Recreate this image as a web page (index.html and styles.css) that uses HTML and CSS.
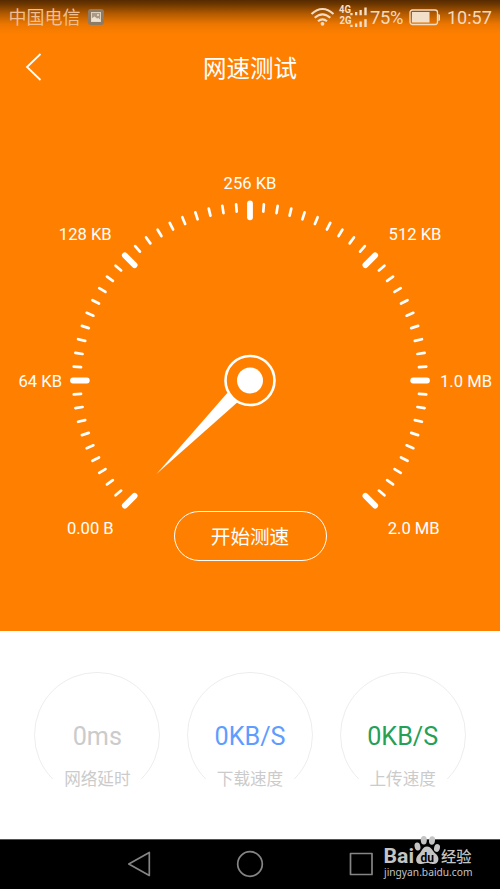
FILE: index.html
```html
<!DOCTYPE html>
<html lang="zh-CN">
<head>
<meta charset="utf-8">
<title>网速测试</title>
<link rel="stylesheet" href="styles.css">
</head>
<body>
<main class="screen">
  <section class="hero">
    <div class="status">
      <span class="carrier">中国电信</span>
      <svg class="photo" width="16" height="16" viewBox="0 0 16 16"><rect width="16" height="16" rx="3" fill="#8d7b65"/><rect x="3.5" y="3.5" width="9" height="9" fill="#a89a87" stroke="#dfd1bc"/><path d="M3.5 12.5V9.5L6.5 7.5L9 9.5L10.5 9L12.5 11V12.5Z" fill="#efe2ce"/><circle cx="10" cy="6" r="1" fill="#efe2ce"/></svg>
      <svg class="radio" width="70" height="28" viewBox="300 0 70 28">
        <g fill="none" stroke="#f3ddc4" stroke-width="2.100"><path d="M311.500 14Q322.500 4 333.500 14M314.700 17.800Q322.500 10.800 330.300 17.800M318 21.300Q322.500 17.300 327 21.300"/></g>
        <circle cx="322.500" cy="23.800" r="1.900" fill="#f3ddc4"/>
        <g class="net"><text x="339" y="12.700" textLength="12" lengthAdjust="spacingAndGlyphs">4G</text><text x="339.500" y="24" textLength="12" lengthAdjust="spacingAndGlyphs">2G</text></g>
        <path d="M350.300 12.900h2.300v2.300h-2.300zM355 12h2.300v3.200H355zM359.500 10h2.300v5.200h-2.300zM364.300 7.500h2.400v7.700h-2.400zM350.300 24.700h2.300v2.300h-2.300zM355 23.600h2.300v3.400H355zM359.500 21.600h2.300V27h-2.300zM364.300 19.200h2.400V27h-2.400z" fill="#f6dfc7"/>
      </svg>
      <span class="percent">75%</span>
      <svg class="battery" width="32" height="17" viewBox="0 0 32 17"><rect x="1" y="1" width="27.500" height="14.500" rx="2.500" fill="none" stroke="#f1dcc4" stroke-width="1.300"/><rect x="3" y="3" width="17.500" height="10.500" fill="#f2dfca"/><path d="M29.300 5q1.700 0 1.700 1.500v4q0 1.500-1.700 1.500z" fill="#f1dcc4"/></svg>
      <time class="clock">10:57</time>
    </div>
    <header class="header">
      <svg class="back" width="18" height="30" viewBox="0 0 18 30"><path d="M15.500 2L2 15L15.500 28" fill="none" stroke="#fff" stroke-width="1.800"/></svg>
      <h1 class="title">网速测试</h1>
    </header>
    <svg class="gauge" width="500" height="445" viewBox="0 100 500 445">
      <g id="ticks"></g>
      <g class="scale">
        <text x="250" y="188.500">256 KB</text>
        <text x="85.300" y="240.300">128 KB</text>
        <text x="415" y="240.300">512 KB</text>
        <text x="40.300" y="387.200">64 KB</text>
        <text x="466" y="387.200">1.0 MB</text>
        <text x="90.300" y="534.300">0.00 B</text>
        <text x="413.700" y="534.300">2.0 MB</text>
      </g>
      <path d="M156.500 474L227.700 392.500L237.200 402.500Z" fill="#fff"/>
      <circle cx="250" cy="380.500" r="24.500" fill="#ff8000" stroke="#fff" stroke-width="2.600"/>
      <circle cx="250" cy="380.500" r="13" fill="#fff"/>
    </svg>
    <button class="start">开始测速</button>
  </section>
  <section class="results">
    <div class="result delay">
      <svg class="arc" width="126" height="108" viewBox="0 0 126 108"><path d="M18.700 107A62.500 62.500 0 1 1 107.300 107"/></svg>
      <strong class="value">0ms</strong><span class="name">网络延时</span>
    </div>
    <div class="result download">
      <svg class="arc" width="126" height="108" viewBox="0 0 126 108"><path d="M18.700 107A62.500 62.500 0 1 1 107.300 107"/></svg>
      <strong class="value">0KB/S</strong><span class="name">下载速度</span>
    </div>
    <div class="result upload">
      <svg class="arc" width="126" height="108" viewBox="0 0 126 108"><path d="M18.700 107A62.500 62.500 0 1 1 107.300 107"/></svg>
      <strong class="value">0KB/S</strong><span class="name">上传速度</span>
    </div>
  </section>
  <footer class="navbar">
    <svg class="nav-icons" width="500" height="59" viewBox="0 830 500 59">
      <g fill="none" stroke="#858585" stroke-width="1.700" stroke-linejoin="round">
        <path d="M149.300 852.500V875.500L128.800 864Z"/>
        <circle cx="250" cy="864" r="12.300"/>
        <rect x="350.500" y="853.500" width="21.500" height="21"/>
      </g>
      <g class="brand">
        <text class="logo" x="383.500" y="863" textLength="30.500" lengthAdjust="spacingAndGlyphs">Bai</text>
        <ellipse cx="417.500" cy="846.500" rx="2.900" ry="4" transform="rotate(-12 417.500 846.500)"/>
        <ellipse cx="423.800" cy="840.300" rx="3" ry="4.200"/>
        <ellipse cx="432" cy="840.500" rx="3" ry="4.200" transform="rotate(8 432 840.500)"/>
        <ellipse cx="437" cy="848" rx="2.900" ry="3.900" transform="rotate(15 437 848)"/>
        <path d="M427 846.500C431.500 846.500 432.500 851.500 436 854C440 857.500 439 864 433.500 864C430 864 430 863 427 863C424 863 424 864 420.500 864C415 864 415 857.500 419 854C422 851.500 422.500 846.500 427 846.500Z"/>
        <text class="du" x="420.500" y="861.500" textLength="13.500" lengthAdjust="spacingAndGlyphs">du</text>
        <text class="experience" x="441" y="861.800" textLength="30.500" lengthAdjust="spacingAndGlyphs">经验</text>
        <text class="site" x="384" y="875.500" textLength="88.500" lengthAdjust="spacingAndGlyphs">jingyan.baidu.com</text>
      </g>
    </svg>
  </footer>
</main>
<script src="script.js"></script>
</body>
</html>
```
FILE: styles.css
```css
* { box-sizing: border-box; }
body {
  margin: 0;
  background: #fff;
  font-family: Roboto, "Noto Sans CJK SC", sans-serif;
}
svg { display: block; flex: none; }
.screen {
  width: 500px;
  height: 889px;
  display: flex;
  flex-direction: column;
  overflow: hidden;
}
.hero {
  height: 630.5px;
  flex: none;
  display: flex;
  flex-direction: column;
  align-items: center;
  background: linear-gradient(#562b00 0, #6b3600 4px, #b55b00 14px, #ec7600 24px, #ff8000 34px);
}
.status {
  width: 100%;
  height: 35px;
  display: flex;
  align-items: center;
  padding-left: 8.5px;
  color: #f4dac0;
  font-size: 18px;
  line-height: 35px;
}
.carrier { width: 72px; color: #efbf91; white-space: nowrap; }
.photo { margin: -1px 0 0 7.5px; }
.radio { margin-left: 196px; align-self: flex-start; }
.net { fill: #f6dfc7; font: bold 10px Roboto, sans-serif; }
.percent { width: 34px; font-size: 18.3px; letter-spacing: -0.3px; }
.battery { margin-left: 5px; }
.clock { margin-left: 6px; font-size: 18px; }
.header {
  width: 100%;
  height: 65px;
  display: grid;
  grid-template-columns: 50px 1fr 50px;
  align-items: center;
}
.back { margin: -2px 0 0 25px; }
.title {
  margin: 2px 0 0;
  color: #fff;
  font-size: 23.5px;
  font-weight: 400;
  line-height: 34px;
  text-align: center;
}
.tick { stroke: #fff; stroke-width: 2.7; stroke-linecap: round; }
.tick-major { stroke-width: 5.8; }
.scale { fill: #fff; font-size: 16.6px; text-anchor: middle; }
.start {
  width: 153px;
  height: 50px;
  flex: none;
  margin: -34px 0 0;
  padding: 3px 0 0;
  border: 1.5px solid #fff;
  border-radius: 25px;
  background: none;
  color: #fff;
  font: 19.6px/46px Roboto, "Noto Sans CJK SC", sans-serif;
}
.results {
  height: 208px;
  flex: none;
  display: grid;
  grid-template-columns: repeat(3, 126px);
  column-gap: 26.7px;
  justify-content: center;
  padding-top: 41.5px;
}
.result {
  display: grid;
  grid-template-rows: 48px 33px 53px;
  justify-items: center;
  align-content: start;
}
.arc { grid-area: 1 / 1 / 4 / 2; }
.arc path { fill: none; stroke: #ededed; stroke-width: 1; }
.value { grid-area: 2 / 1; font-size: 25.2px; font-weight: 400; line-height: 33px; }
.name { grid-area: 3 / 1; margin-top: 14px; color: #cbcbcb; font-size: 16.6px; line-height: 25px; }
.delay .value { color: #cbcbcb; }
.download .value { color: #5e9cff; }
.upload .value { color: #25a054; }
.navbar {
  height: 50.5px;
  flex: none;
  border-top: 1px solid #555;
  background: #000;
}
.nav-icons { margin-top: -9.5px; }
.brand { fill: #c4c4c4; }
.logo { font: bold 20px Roboto, sans-serif; }
.du { fill: #000; font: bold 12px Roboto, sans-serif; }
.experience { font: 500 15px "Noto Sans CJK SC", sans-serif; }
.site { font: 11px "Noto Sans", sans-serif; }
```
FILE: script.js
```js
// Draws the dial: 270 degrees, a major tick every 45 and a minor one every 4.5.
const ticks = document.getElementById("ticks");
for (let i = 0; i <= 60; i += 1) {
  const major = i % 10 === 0;
  const line = document.createElementNS("http://www.w3.org/2000/svg", "line");
  line.setAttribute("class", major ? "tick tick-major" : "tick");
  line.setAttribute("x1", 250);
  line.setAttribute("x2", 250);
  line.setAttribute("y1", 380.5 - (major ? 177 : 176.8));
  line.setAttribute("y2", 380.5 - (major ? 163.2 : 169.5));
  line.setAttribute("transform", `rotate(${-135 + i * 4.5} 250 380.5)`);
  ticks.appendChild(line);
}
```
